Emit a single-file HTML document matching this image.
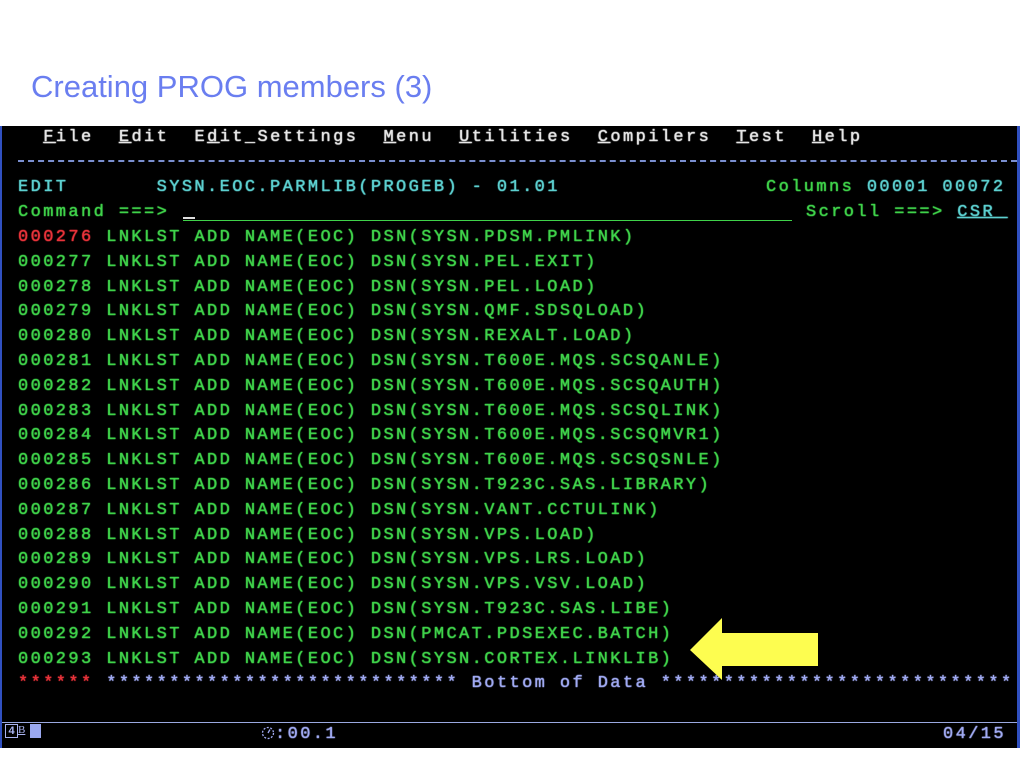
<!DOCTYPE html>
<html><head><meta charset="utf-8"><style>
body{margin:0;width:1024px;height:768px;background:#fff;position:relative;overflow:hidden;font-family:"Liberation Mono",monospace}
.title{position:absolute;left:31px;top:69px;font-family:"Liberation Sans",sans-serif;font-size:31px;color:#6a7ef0}
.term{position:absolute;left:0;top:126px;width:1020px;height:622px;background:#000;border-left:2px solid #3050c0;border-right:3px solid #3050c0;box-sizing:border-box}
.in{position:absolute;left:0;top:2px;right:0;bottom:0}
.l{position:absolute;left:16px;font-size:17px;letter-spacing:2.4px;white-space:pre;line-height:20px;text-shadow:0 0 1px currentColor,0 0 1px currentColor}
.g{color:#3fd24a}.c{color:#5ccfcf}.w{color:#e6e6e6}.r{color:#e8333a}.b{color:#a0aaf2}
u{text-decoration:underline}
</style></head><body>
<div class="title">Creating PROG members (3)</div>
<div class="term"><div class="in">
<div class="l w" style="top:0px">  <u>F</u>ile  <u>E</u>dit  E<u>d</u>it_Settings  <u>M</u>enu  <u>U</u>tilities  <u>C</u>ompilers  <u>T</u>est  <u>H</u>elp</div>
<div style="position:absolute;left:16px;right:0;top:32px;border-top:2px dashed #7a8fd0"></div>
<div class="l c" style="top:50px">EDIT       SYSN.EOC.PARMLIB(PROGEB) - 01.01</div>
<div class="l" style="top:50px;left:764px"><span class="g">Columns</span><span class="c"> 00001 00072</span></div>
<div class="l g" style="top:75px">Command ===></div>
<div style="position:absolute;left:181px;width:609px;top:92px;border-top:1px solid #3fd24a"></div>
<div style="position:absolute;left:181px;width:12px;top:89px;border-top:2px solid #ddd"></div>
<div class="l" style="top:75px;left:804px"><span class="g">Scroll ===></span> <u class="c">CSR </u></div>
<div class="l g" style="top:100px"><span class="r">000276</span> LNKLST ADD NAME(EOC) DSN(SYSN.PDSM.PMLINK)</div>
<div class="l g" style="top:124.8px">000277 LNKLST ADD NAME(EOC) DSN(SYSN.PEL.EXIT)</div>
<div class="l g" style="top:149.6px">000278 LNKLST ADD NAME(EOC) DSN(SYSN.PEL.LOAD)</div>
<div class="l g" style="top:174.4px">000279 LNKLST ADD NAME(EOC) DSN(SYSN.QMF.SDSQLOAD)</div>
<div class="l g" style="top:199.2px">000280 LNKLST ADD NAME(EOC) DSN(SYSN.REXALT.LOAD)</div>
<div class="l g" style="top:224px">000281 LNKLST ADD NAME(EOC) DSN(SYSN.T600E.MQS.SCSQANLE)</div>
<div class="l g" style="top:248.8px">000282 LNKLST ADD NAME(EOC) DSN(SYSN.T600E.MQS.SCSQAUTH)</div>
<div class="l g" style="top:273.6px">000283 LNKLST ADD NAME(EOC) DSN(SYSN.T600E.MQS.SCSQLINK)</div>
<div class="l g" style="top:298.4px">000284 LNKLST ADD NAME(EOC) DSN(SYSN.T600E.MQS.SCSQMVR1)</div>
<div class="l g" style="top:323.2px">000285 LNKLST ADD NAME(EOC) DSN(SYSN.T600E.MQS.SCSQSNLE)</div>
<div class="l g" style="top:348px">000286 LNKLST ADD NAME(EOC) DSN(SYSN.T923C.SAS.LIBRARY)</div>
<div class="l g" style="top:372.8px">000287 LNKLST ADD NAME(EOC) DSN(SYSN.VANT.CCTULINK)</div>
<div class="l g" style="top:397.6px">000288 LNKLST ADD NAME(EOC) DSN(SYSN.VPS.LOAD)</div>
<div class="l g" style="top:422.4px">000289 LNKLST ADD NAME(EOC) DSN(SYSN.VPS.LRS.LOAD)</div>
<div class="l g" style="top:447.2px">000290 LNKLST ADD NAME(EOC) DSN(SYSN.VPS.VSV.LOAD)</div>
<div class="l g" style="top:472px">000291 LNKLST ADD NAME(EOC) DSN(SYSN.T923C.SAS.LIBE)</div>
<div class="l g" style="top:496.8px">000292 LNKLST ADD NAME(EOC) DSN(PMCAT.PDSEXEC.BATCH)</div>
<div class="l g" style="top:521.6px">000293 LNKLST ADD NAME(EOC) DSN(SYSN.CORTEX.LINKLIB)</div>
<div class="l b" style="top:546.4px"><span class="r">******</span> **************************** Bottom of Data ****************************</div>
</div>
<div style="position:absolute;left:0;right:0;top:596px;border-top:1px solid #9aa8e0"></div>
<div style="position:absolute;left:3px;top:598px;width:11px;height:12px;border:1px solid #aab4f0;color:#aab4f0;font:bold 11px 'Liberation Sans',sans-serif;line-height:12px;text-align:center">4</div>
<div style="position:absolute;left:16px;top:598px;font:11px 'Liberation Serif',serif;color:#aab4f0;text-decoration:underline">B</div>
<div style="position:absolute;left:28px;top:598px;width:11px;height:14px;background:#9aa8f0"></div>
<svg style="position:absolute;left:259px;top:600px" width="14" height="14"><circle cx="7" cy="7" r="5.5" fill="none" stroke="#a0aaf2" stroke-width="1.3" stroke-dasharray="2 1.5"/><path d="M7 7 L9 3.5" stroke="#a0aaf2" stroke-width="1.3"/></svg>
<div class="l b" style="top:599px;left:273px">:00.1</div>
<div class="l b" style="top:599px;left:941px">04/15</div>
</div>
<svg style="position:absolute;left:0;top:0" width="1024" height="768"><polygon points="690,650 722,618 722,633 818,633 818,666 722,666 722,680" fill="#fdfd50"/></svg>
</body></html>
